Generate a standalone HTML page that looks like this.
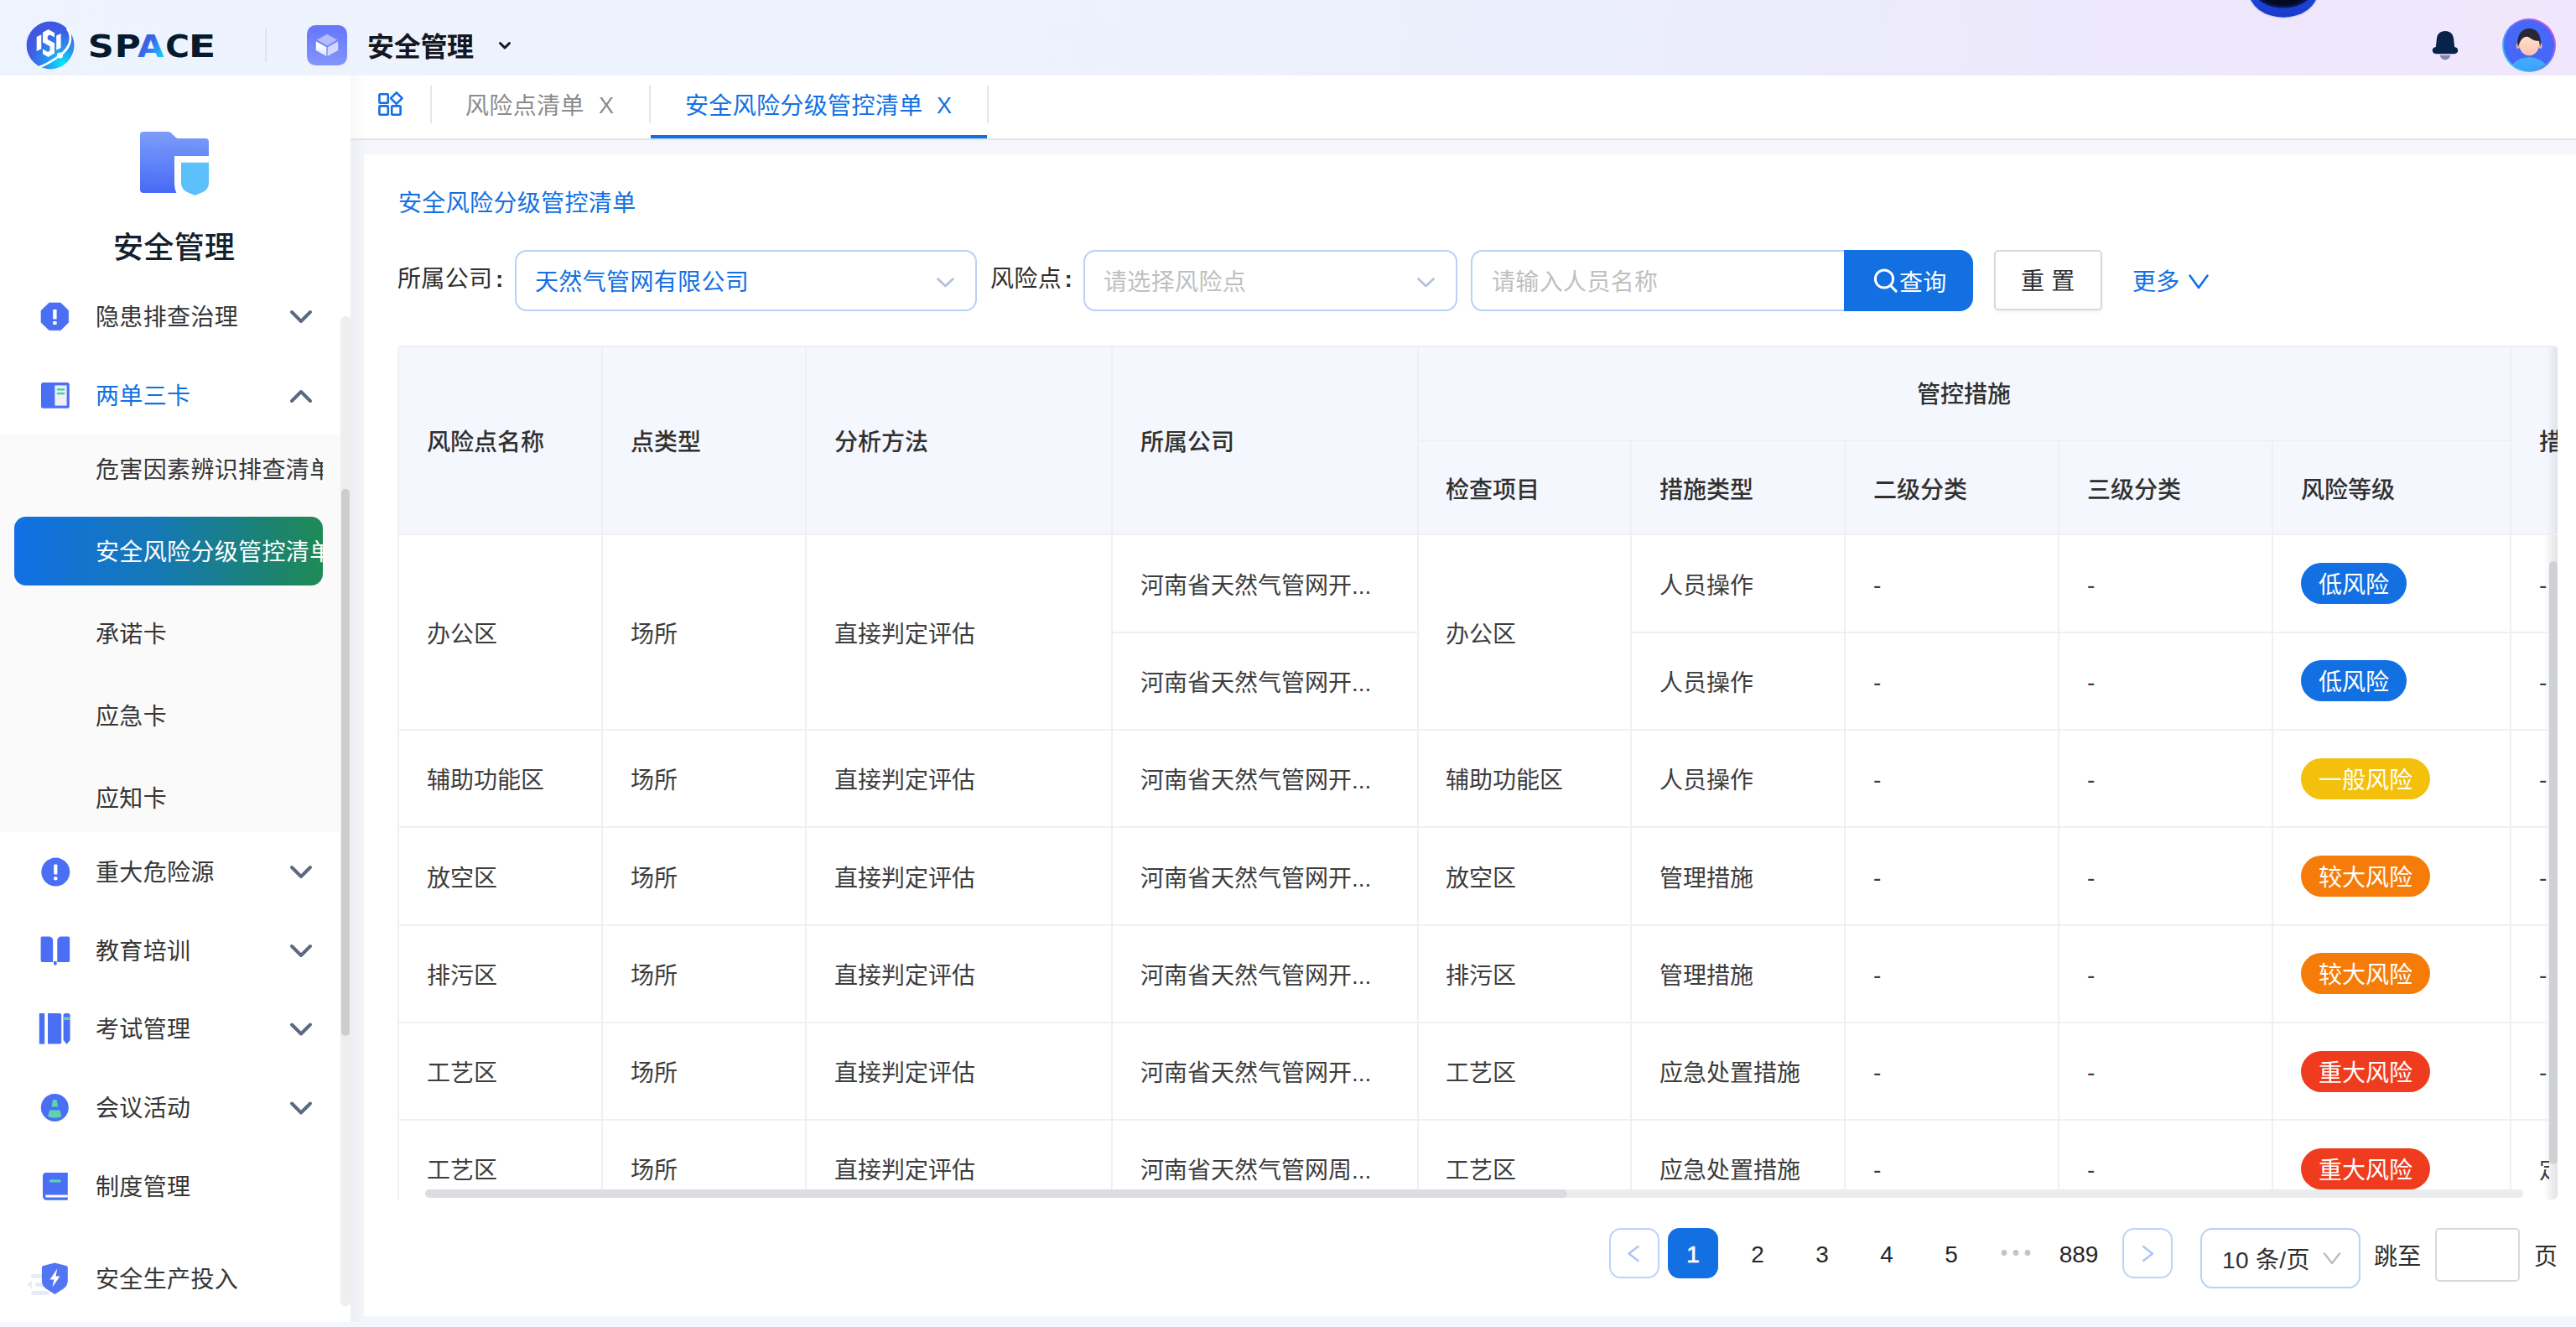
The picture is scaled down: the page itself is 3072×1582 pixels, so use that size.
<!DOCTYPE html>
<html lang="zh-CN">
<head>
<meta charset="utf-8">
<title>安全风险分级管控清单</title>
<style>
*{box-sizing:border-box;margin:0;padding:0}
html,body{width:3072px;height:1582px;overflow:hidden}
body{position:relative;background:#f4f7fe;font-family:"Liberation Sans","Noto Sans CJK SC",sans-serif;font-size:28px;color:#2e2e2e;line-height:1}
.a{position:absolute}
.t{position:absolute;white-space:nowrap;line-height:40px;height:40px;font-size:28px;margin-top:2px;letter-spacing:0.35px}
svg{position:absolute;overflow:visible}
/* header */
#hdr{position:absolute;left:0;top:0;width:3072px;height:90px;background:linear-gradient(93deg,#eef4fd 0%,#ecf1fd 50%,#ebedfc 66%,#ede8fc 82%,#f1e7fc 100%);overflow:hidden}
/* sidebar */
#side{position:absolute;left:0;top:90px;width:418px;height:1486px;background:#fff;overflow:hidden}
#sub{position:absolute;left:0;top:518px;width:406px;height:474px;background:#fafafa}
#strack{position:absolute;left:405.500px;top:377px;width:12.500px;height:1180px;background:#eeeeee;border-radius:6px}
#sthumb{position:absolute;left:407px;top:583px;width:10px;height:652px;background:#cdcdcf;border-radius:5px}
.mi{color:#363636}
.pill{position:absolute;left:17px;top:616px;width:368px;height:82px;border-radius:14px;background:linear-gradient(90deg,#1170e4 0%,#1578b8 45%,#1b8276 80%,#1f8a56 100%)}
.clip{overflow:hidden;width:270px}
/* main */
#main{position:absolute;left:418px;top:90px;width:2654px;height:1486px;background:linear-gradient(90deg,#eceef3 0,#eff1f6 6px,#f3f5fa 14px,#f4f6fb 18px)}
#tabs{position:absolute;left:418px;top:90px;width:2654px;height:77px;background:linear-gradient(90deg,#f8f8f8 0,#fafbfa 8px,#fff 18px);border-bottom:2px solid #e3e3e4}
#card{position:absolute;left:434px;top:184px;width:2638px;height:1385px;background:#fff}
.vd{position:absolute;width:2px;background:#e6e6e6}
.blue{color:#1270e3}
.sel{position:absolute;border:2px solid #b9d1f6;border-radius:14px;background:#fff}
.ph{color:#bfbfbf}
/* table */
#tbl{position:absolute;left:474px;top:412px;width:2576px;height:1018px;overflow:hidden;background:#fff;border-radius:5px 5px 6px 0}
#thead{position:absolute;left:0;top:0;width:2576px;height:226px;background:#f4f7fe}
.vl{position:absolute;width:2px;background:#f0f0f0}
.hl{position:absolute;height:2px;background:#f0f0f0}
.th{position:absolute;white-space:nowrap;line-height:40px;height:40px;font-size:28px;font-weight:500;color:#303030;margin-top:3px}
.td{position:absolute;white-space:nowrap;line-height:40px;height:40px;font-size:28px;color:#3d3d3d;margin-top:3px}
.bd{position:absolute;height:49px;border-radius:25px;color:#fff;font-size:28px;line-height:53px;text-align:center;white-space:nowrap}
.pg{position:absolute;top:1464px;width:60px;height:60px;line-height:63px;text-align:center;font-size:28px;color:#262626}
</style>
</head>
<body>
<div id="hdr">
  <!-- floating orb -->
  <svg style="left:2673px;top:-50px" width="100" height="100" viewBox="2673 -50 100 100">
    <defs><radialGradient id="orb" cx="50%" cy="50%" r="50%"><stop offset="0" stop-color="#01040f"/><stop offset="0.82" stop-color="#030a26"/><stop offset="1" stop-color="#0b1f78"/></radialGradient>
    <linearGradient id="orb2" x1="0" y1="0" x2="0" y2="1"><stop offset="0.5" stop-color="#2148dc"/><stop offset="1" stop-color="#1a3ac8"/></linearGradient></defs>
    <ellipse cx="2723" cy="-9.500" rx="42" ry="31.700" fill="#b9b4e4" opacity="0.45"/>
    <ellipse cx="2723" cy="-10" rx="41" ry="30.700" fill="url(#orb2)"/>
    <ellipse cx="2723" cy="-12" rx="35.200" ry="21.600" fill="url(#orb)"/>
  </svg>
  <!-- logo -->
  <svg style="left:28px;top:22px" width="64" height="64" viewBox="28 22 64 64">
    <defs>
      <radialGradient id="lg1" gradientUnits="userSpaceOnUse" cx="74" cy="76" r="46"><stop offset="0" stop-color="#04eafc"/><stop offset="0.4" stop-color="#2596f0"/><stop offset="0.8" stop-color="#3c62e4"/><stop offset="1" stop-color="#3f58e0"/></radialGradient>
    </defs>
    <circle cx="60" cy="54" r="28.4" fill="url(#lg1)"/>
    <path d="M80.500 34.500 C87.500 45 83.500 57.500 71.500 66 C63.500 72 55 77 47.500 79.800" fill="none" stroke="#fff" stroke-width="2.800" stroke-linecap="round"/>
    <circle cx="71.5" cy="66" r="3.6" fill="#fff"/>
    <path d="M43.7 44 L49.3 41.2 L49.3 58.2 L43.7 61 Z" fill="#fff"/>
    <path d="M67.2 42.5 L72.6 40 L72.6 57 L67.2 59.8 Z" fill="#fff"/>
    <path d="M57.5 35 L65 39.3 L65 44.5 L59.5 41.5 L56.8 43 L56.8 47 L65 51.6 L65 63.6 L57.5 68 L51 64.2 L51 58.6 L57 62 L59.6 60.5 L59.6 55.2 L51 50.4 L51 38.8 Z" fill="#fff"/>
  </svg>
  <svg style="left:100px;top:30px" width="170" height="50" viewBox="100 30 170 50">
    <defs><linearGradient id="lgA" gradientUnits="userSpaceOnUse" x1="165" y1="44" x2="195" y2="65"><stop offset="0" stop-color="#3f4fdc"/><stop offset="0.5" stop-color="#3470ec"/><stop offset="1" stop-color="#14ccf8"/></linearGradient></defs>
    <text y="68.3" font-family="DejaVu Sans, Liberation Sans, sans-serif" font-weight="700" font-size="37.6" fill="#061a2e"><tspan x="104.8" textLength="31.1" lengthAdjust="spacingAndGlyphs">S</tspan><tspan x="136.8" textLength="31.1" lengthAdjust="spacingAndGlyphs">P</tspan><tspan x="164.1" textLength="31.4" lengthAdjust="spacingAndGlyphs" fill="url(#lgA)">A</tspan><tspan x="197.2" textLength="28.7" lengthAdjust="spacingAndGlyphs">C</tspan><tspan x="224.8" textLength="32.6" lengthAdjust="spacingAndGlyphs">E</tspan></text>
  </svg>
  <div class="a" style="left:316px;top:34px;width:2px;height:40px;background:#dfe3ee"></div>
  <!-- module icon -->
  <svg style="left:366px;top:30px" width="48" height="48" viewBox="366 30 48 48">
    <defs>
      <linearGradient id="mg" x1="0" y1="0" x2="0" y2="1"><stop offset="0" stop-color="#6476fb"/><stop offset="1" stop-color="#8295fc"/></linearGradient>
      <linearGradient id="mgl" x1="0" y1="0" x2="0" y2="1"><stop offset="0.3" stop-color="#ffffff"/><stop offset="1" stop-color="#cfe6ff"/></linearGradient>
    </defs>
    <rect x="366" y="30" width="48" height="48" rx="10.5" fill="url(#mg)"/>
    <path d="M390 40.8 L402.2 47.6 L390 54.4 L377.8 47.6 Z" fill="#b3bbfd"/>
    <path d="M376.8 49.2 L389.3 56.2 L389.3 67 L376.8 60 Z" fill="url(#mgl)"/>
    <path d="M403.2 49.2 L390.7 56.2 L390.7 67 L403.2 60 Z" fill="#d4d8fe"/>
  </svg>
  <div class="t" style="left:438px;top:34px;font-size:32px;font-weight:700;color:#14171f;letter-spacing:-0.3px">安全管理</div>
  <svg style="left:592px;top:47px" width="20" height="14" viewBox="592 47 20 14"><path d="M596.5 51.5 L602 57 L607.5 51.5" fill="none" stroke="#14171f" stroke-width="3" stroke-linecap="round" stroke-linejoin="round"/></svg>
  <!-- bell -->
  <svg style="left:2896px;top:34px" width="40" height="40" viewBox="2896 34 40 40">
    <path d="M2916 36.900 C2909.800 36.900 2906.600 40.800 2906 45.500 L2904.800 56 C2902.400 56.200 2900.800 57.900 2900.800 60.100 C2900.800 62.500 2902.500 64.200 2905 64.200 L2927 64.200 C2929.500 64.200 2931.200 62.500 2931.200 60.100 C2931.200 57.900 2929.600 56.200 2927.200 56 L2926 45.500 C2925.400 40.800 2922.200 36.900 2916 36.900 Z" fill="#07234a"/>
    <path d="M2909.600 65.700 L2922.400 65.700 C2921.700 69.200 2919.200 71.200 2916 71.200 C2912.800 71.200 2910.300 69.200 2909.600 65.700 Z" fill="#8089ad"/>
  </svg>
  <!-- avatar -->
  <svg style="left:2984px;top:22px" width="64" height="64" viewBox="0 0 64 64">
    <defs>
      <linearGradient id="ring" x1="0" y1="1" x2="1" y2="0"><stop offset="0" stop-color="#2fe6e6"/><stop offset="0.5" stop-color="#5b7cf7"/><stop offset="1" stop-color="#ff3de0"/></linearGradient>
      <linearGradient id="skin" x1="0" y1="0" x2="0" y2="1"><stop offset="0" stop-color="#ffe6d2"/><stop offset="1" stop-color="#fbc3ae"/></linearGradient>
      <linearGradient id="shirt" x1="0" y1="0" x2="0" y2="1"><stop offset="0" stop-color="#45aeff"/><stop offset="1" stop-color="#2f8cf5"/></linearGradient>
      <clipPath id="avc"><circle cx="32" cy="32" r="30"/></clipPath>
    </defs>
    <circle cx="32" cy="32" r="32" fill="url(#ring)"/>
    <circle cx="32" cy="32" r="30" fill="#4767f9"/>
    <g clip-path="url(#avc)">
      <ellipse cx="32" cy="66" rx="24" ry="19.800" fill="url(#shirt)"/>
      <ellipse cx="18.900" cy="32.800" rx="2.100" ry="3.200" fill="#f6b29c"/>
      <ellipse cx="45.500" cy="32.800" rx="2.100" ry="3.200" fill="#f6b29c"/>
      <ellipse cx="32.200" cy="30.500" rx="12" ry="13.800" fill="url(#skin)"/>
      <path d="M19 34 C16.500 22 22 12 32.300 12 C42.600 12 47.800 22 45.400 34 C44.800 31.500 44.300 29 44 26.800 C40 27 36.600 25.600 33.600 23.400 C31 21.500 28.500 21.200 26 22.600 C22.600 24.600 20.600 28.500 19 34 Z" fill="#2a2832"/>
    </g>
  </svg>
</div>
<div id="side"></div>
<div id="sub"></div>
<div id="strack"></div>
<div id="sthumb"></div>
<!-- sidebar big icon -->
<svg style="left:160px;top:150px" width="100" height="90" viewBox="160 150 100 90">
  <defs>
    <linearGradient id="fg" x1="0" y1="0" x2="0" y2="1"><stop offset="0" stop-color="#7c9df9"/><stop offset="1" stop-color="#476af6"/></linearGradient>
  </defs>
  <path d="M171 157 L200 157 C202 157 203.500 157.800 205 159.300 L209.500 163.800 C210.500 164.800 211.500 165 213 165 L245 165 C247.500 165 249 166.500 249 169 L249 226 C249 228.500 247.500 230 245 230 L171 230 C168.500 230 167 228.500 167 226 L167 161 C167 158.500 168.500 157 171 157 Z" fill="url(#fg)"/>
  <path d="M208 186 L252 186 L252 236 L214 236 C211 232 208 226 208 219 Z" fill="#fff"/>
  <path d="M216 193.800 L249 193.800 L249 218 C249 223 246.500 226.500 242 229 L232.500 233 L223 229 C218.500 226.500 216 223 216 218 Z" fill="#5cc0fa"/>
</svg>
<div class="t" style="left:135px;top:272px;font-size:36px;font-weight:500;color:#15202d;line-height:44px;height:44px">安全管理</div>

<!-- menu icons -->
<svg style="left:40px;top:350px" width="56" height="56" viewBox="40 350 56 56">
  <path d="M58.600 361 L72.400 361 L81.700 370.300 L81.700 384.400 L72.400 393.700 L58.600 393.700 L49 384.400 L49 370.300 Z" fill="#4a6ff5" stroke="#4a6ff5" stroke-width="0.600" stroke-linejoin="round"/>
  <rect x="63.200" y="369" width="4.400" height="11.500" fill="#fff"/><rect x="63.200" y="383" width="4.400" height="4" fill="#fff"/>
</svg>
<svg style="left:40px;top:444px" width="56" height="56" viewBox="40 444 56 56">
  <rect x="49" y="456" width="33.800" height="30.800" rx="2.500" fill="#4a6ff5"/>
  <rect x="65.400" y="459.400" width="14.200" height="24.200" fill="#eef0f5"/>
  <rect x="67.800" y="463" width="9.400" height="2.600" fill="#54cfa8"/><rect x="67.800" y="467.800" width="9.400" height="2.600" fill="#54cfa8"/>
</svg>
<svg style="left:40px;top:1012px" width="56" height="56" viewBox="40 1012 56 56">
  <circle cx="66.300" cy="1039.600" r="17" fill="#4a6ff5"/>
  <rect x="64.200" y="1030.500" width="4.200" height="12" rx="1" fill="#fff"/><circle cx="66.300" cy="1047.200" r="2.300" fill="#fff"/>
</svg>
<svg style="left:40px;top:1105px" width="56" height="56" viewBox="40 1105 56 56">
  <path d="M48.600 1118.500 C48.600 1117.300 49.400 1116.500 50.600 1116.500 L58 1116.500 C61 1116.500 63.200 1118.500 63.200 1121.500 L63.200 1147 L50.600 1147 C49.400 1147 48.600 1146.200 48.600 1145 Z" fill="#4a6ff5"/>
  <path d="M83.200 1118.500 C83.200 1117.300 82.400 1116.500 81.200 1116.500 L73.500 1116.500 C70.500 1116.500 68.300 1118.500 68.300 1121.500 L68.300 1147 L81.200 1147 C82.400 1147 83.200 1146.200 83.200 1145 Z" fill="#4a6ff5"/>
  <rect x="64" y="1146" width="3.600" height="4.600" rx="1" fill="#4a6ff5"/>
</svg>
<svg style="left:40px;top:1198px" width="56" height="56" viewBox="40 1198 56 56">
  <rect x="46.800" y="1208" width="6.400" height="36.600" fill="#4a6ff5"/>
  <path d="M57 1208 L71 1208 C72.300 1208 73.200 1208.900 73.200 1210.200 L73.200 1242.400 C73.200 1243.700 72.300 1244.600 71 1244.600 L57 1244.600 Z" fill="#4a6ff5"/>
  <path d="M75.600 1210.500 C75.600 1209 76.600 1208 78.100 1208 L81.100 1208 C82.600 1208 83.600 1209 83.600 1210.500 L83.600 1240 L79.600 1245 L75.600 1240 Z" fill="#4a6ff5"/>
  <rect x="75.600" y="1212.600" width="8" height="3.400" fill="#5fd3b0"/>
</svg>
<svg style="left:40px;top:1292px" width="56" height="56" viewBox="40 1292 56 56">
  <circle cx="65.300" cy="1320.400" r="16.500" fill="#4a6ff5"/>
  <path d="M64 1311 L66.600 1311 C67.300 1311 67.600 1311.300 67.800 1312 L69.200 1319.600 L61.400 1319.600 L62.800 1312 C63 1311.300 63.300 1311 64 1311 Z" fill="#5fd3b0"/>
  <path d="M60.200 1323.600 L70.400 1323.600 C71.200 1323.600 71.600 1324 71.800 1324.700 L73.400 1331 C70.500 1333.200 60.100 1333.200 57.200 1331 L58.800 1324.700 C59 1324 59.400 1323.600 60.200 1323.600 Z" fill="#5fd3b0"/>
</svg>
<svg style="left:40px;top:1386px" width="56" height="56" viewBox="40 1386 56 56">
  <path d="M55 1398 L80.800 1398 L80.800 1430.800 L55.500 1430.800 C52.800 1430.800 51 1429 51 1426.300 L51 1402 C51 1399.500 52.500 1398 55 1398 Z" fill="#4a6ff5"/>
  <path d="M55.700 1424.600 L80.800 1424.600 L80.800 1427.600 L55.700 1427.600 C54.600 1427.600 54 1427 54 1426.100 C54 1425.200 54.600 1424.600 55.700 1424.600 Z" fill="#fff"/>
  <rect x="59.300" y="1406.300" width="13" height="3.200" fill="#5fd3b0"/>
</svg>
<!-- faint collapse icon -->
<svg style="left:28px;top:1512px" width="40" height="40" viewBox="28 1512 40 40" opacity="0.9">
  <rect x="37" y="1519" width="21" height="5" rx="2.500" fill="#e4e9f3"/><rect x="42" y="1529" width="16" height="5" rx="2.500" fill="#e4e9f3"/><rect x="37" y="1539" width="21" height="5" rx="2.500" fill="#e4e9f3"/>
  <path d="M32 1531.500 L38 1527 L38 1536 Z" fill="#e4e9f3"/>
</svg>
<svg style="left:40px;top:1496px" width="56" height="56" viewBox="40 1496 56 56">
  <path d="M65.300 1505.600 L79 1509 C80.200 1509.300 80.800 1510 80.800 1511.200 L80.800 1527 C80.800 1531 79 1534 75.500 1536.500 L65.300 1542.900 L55.200 1536.500 C51.700 1534 49.900 1531 49.900 1527 L49.900 1511.200 C49.900 1510 50.500 1509.300 51.700 1509 Z" fill="#4a6ff5" opacity="0.96"/>
  <path d="M68.300 1512.500 L59.500 1525.500 L64.300 1525.500 L62.500 1534.500 L71.500 1521.500 L66.500 1521.500 Z" fill="#fff"/>
</svg>
<!-- chevrons -->
<svg style="left:340px;top:360px" width="40" height="36" viewBox="340 360 40 36"><path d="M348 372 L359 383 L370 372" fill="none" stroke="#5b6a7f" stroke-width="4" stroke-linecap="round" stroke-linejoin="round"/></svg>
<svg style="left:340px;top:454px" width="40" height="36" viewBox="340 454 40 36"><path d="M348 478 L359 467 L370 478" fill="none" stroke="#5b6a7f" stroke-width="4" stroke-linecap="round" stroke-linejoin="round"/></svg>
<svg style="left:340px;top:1022px" width="40" height="36" viewBox="340 1022 40 36"><path d="M348 1034 L359 1045 L370 1034" fill="none" stroke="#5b6a7f" stroke-width="4" stroke-linecap="round" stroke-linejoin="round"/></svg>
<svg style="left:340px;top:1116px" width="40" height="36" viewBox="340 1116 40 36"><path d="M348 1128 L359 1139 L370 1128" fill="none" stroke="#5b6a7f" stroke-width="4" stroke-linecap="round" stroke-linejoin="round"/></svg>
<svg style="left:340px;top:1210px" width="40" height="36" viewBox="340 1210 40 36"><path d="M348 1221.500 L359 1232.500 L370 1221.500" fill="none" stroke="#5b6a7f" stroke-width="4" stroke-linecap="round" stroke-linejoin="round"/></svg>
<svg style="left:340px;top:1304px" width="40" height="36" viewBox="340 1304 40 36"><path d="M348 1315.500 L359 1326.500 L370 1315.500" fill="none" stroke="#5b6a7f" stroke-width="4" stroke-linecap="round" stroke-linejoin="round"/></svg>
<!-- menu text -->
<div class="t mi" style="left:114px;top:357px">隐患排查治理</div>
<div class="t mi blue" style="left:114px;top:451px">两单三卡</div>
<div class="t mi clip" style="left:114px;top:539px;width:271px">危害因素辨识排查清单</div>
<div class="pill"></div>
<div class="t mi clip" style="left:114px;top:637px;width:271px;color:#fff">安全风险分级管控清单</div>
<div class="t mi" style="left:114px;top:735px">承诺卡</div>
<div class="t mi" style="left:114px;top:833px">应急卡</div>
<div class="t mi" style="left:114px;top:931px">应知卡</div>
<div class="t mi" style="left:114px;top:1019px">重大危险源</div>
<div class="t mi" style="left:114px;top:1113px">教育培训</div>
<div class="t mi" style="left:114px;top:1206px">考试管理</div>
<div class="t mi" style="left:114px;top:1300px">会议活动</div>
<div class="t mi" style="left:114px;top:1394px">制度管理</div>
<div class="t mi" style="left:114px;top:1504px">安全生产投入</div>
<div id="main"></div>
<div id="tabs"></div>
<!-- tab bar -->
<svg style="left:448px;top:106px" width="36" height="36" viewBox="448 106 36 36">
  <g fill="none" stroke="#1270e3" stroke-width="2.600" stroke-linejoin="round">
    <rect x="452.400" y="112.300" width="10.400" height="10.400" rx="1"/>
    <rect x="452.400" y="126.400" width="10.400" height="10.400" rx="1"/>
    <rect x="467.200" y="126.400" width="10.400" height="10.400" rx="1"/>
    <path d="M472.800 110.300 L479.600 117.100 L472.800 123.900 L466 117.100 Z"/>
  </g>
</svg>
<div class="vd" style="left:513px;top:102px;height:45px"></div>
<div class="vd" style="left:774px;top:102px;height:45px"></div>
<div class="vd" style="left:1177px;top:102px;height:45px"></div>
<div class="t" style="left:555px;top:105px;color:#8c8c8c">风险点清单</div>
<div class="t" style="left:714px;top:104px;color:#8c8c8c;font-size:27px;letter-spacing:0">X</div>
<div class="t blue" style="left:817px;top:105px">安全风险分级管控清单</div>
<div class="t blue" style="left:1117px;top:104px;font-size:27px;letter-spacing:0">X</div>
<div class="a" style="left:776px;top:161px;width:401px;height:4px;background:#1270e3"></div>

<div id="card"></div>
<div class="t blue" style="left:475px;top:221px">安全风险分级管控清单</div>

<!-- filter row -->
<div class="t" style="left:474px;top:311px">所属公司<span style="margin-left:3.5px;font-weight:700">:</span></div>
<div class="sel" style="left:614px;top:298px;width:551px;height:73px"></div>
<div class="t blue" style="left:638px;top:315px">天然气管网有限公司</div>
<svg style="left:1112px;top:324px" width="32" height="24" viewBox="1112 324 32 24"><path d="M1118.500 332.500 L1127.500 341 L1136.500 332.500" fill="none" stroke="#b4c0de" stroke-width="2.800" stroke-linecap="round" stroke-linejoin="round"/></svg>
<div class="t" style="left:1181px;top:311px">风险点<span style="margin-left:3.5px;font-weight:700">:</span></div>
<div class="sel" style="left:1292px;top:298px;width:446px;height:73px"></div>
<div class="t ph" style="left:1316px;top:315px">请选择风险点</div>
<svg style="left:1685px;top:324px" width="32" height="24" viewBox="1685 324 32 24"><path d="M1691.500 332.500 L1700.500 341 L1709.500 332.500" fill="none" stroke="#b4c0de" stroke-width="2.800" stroke-linecap="round" stroke-linejoin="round"/></svg>
<div class="sel" style="left:1754px;top:298px;width:460px;height:73px;border-radius:14px 0 0 14px"></div>
<div class="t ph" style="left:1779px;top:315px">请输入人员名称</div>
<div class="a" style="left:2199px;top:298px;width:154px;height:73px;background:#1270e3;border-radius:0 16px 16px 0"></div>
<svg style="left:2230px;top:316px" width="40" height="40" viewBox="2230 316 40 40"><circle cx="2247" cy="332.500" r="10.600" fill="none" stroke="#fff" stroke-width="3"/><path d="M2254.600 340.500 L2261 347" stroke="#fff" stroke-width="3.200" stroke-linecap="round"/></svg>
<div class="t" style="left:2265px;top:316px;color:#fff">查询</div>
<div class="a" style="left:2378px;top:298px;width:129px;height:72px;background:#fff;border:2px solid #d9d9d9;border-radius:5px;box-shadow:0 3px 4px rgba(0,0,0,0.04)"></div>
<div class="t" style="left:2410px;top:314px">重<span style="margin-left:8px">置</span></div>
<div class="t blue" style="left:2543px;top:315px">更多</div>
<svg style="left:2604px;top:320px" width="36" height="30" viewBox="2604 320 36 30"><path d="M2611.500 328.500 L2622 343 L2632.500 328.500" fill="none" stroke="#1270e3" stroke-width="2.600" stroke-linecap="round" stroke-linejoin="round"/></svg>
<div id="tbl">
<div id="thead"></div>
<div class="a" style="left:2563px;top:0;width:13px;height:226px;background:linear-gradient(90deg,rgba(224,227,236,0) 0%,rgba(224,227,236,1) 100%)"></div>
<div class="a" style="left:2560px;top:226px;width:16px;height:792px;background:linear-gradient(90deg,rgba(228,228,232,0) 0%,rgba(228,228,232,1) 100%)"></div>
<div class="vl" style="left:0px;top:0px;height:1018px"></div>
<div class="vl" style="left:243px;top:0px;height:1006px"></div>
<div class="vl" style="left:486px;top:0px;height:1006px"></div>
<div class="vl" style="left:851px;top:0px;height:1006px"></div>
<div class="vl" style="left:1216px;top:0px;height:1006px"></div>
<div class="vl" style="left:1470px;top:112px;height:894px"></div>
<div class="vl" style="left:1725px;top:112px;height:894px"></div>
<div class="vl" style="left:1980px;top:112px;height:894px"></div>
<div class="vl" style="left:2235px;top:112px;height:894px"></div>
<div class="vl" style="left:2519px;top:0px;height:1006px"></div>
<div class="hl" style="left:1216px;top:112px;width:1305px"></div>
<div class="hl" style="left:0px;top:224px;width:2576px"></div>
<div class="hl" style="left:0px;top:0px;width:2576px"></div>
<div class="hl" style="left:851px;top:341px;width:367px"></div>
<div class="hl" style="left:1470px;top:341px;width:1106px"></div>
<div class="hl" style="left:0px;top:457px;width:2576px"></div>
<div class="hl" style="left:0px;top:573px;width:2576px"></div>
<div class="hl" style="left:0px;top:690px;width:2576px"></div>
<div class="hl" style="left:0px;top:806px;width:2576px"></div>
<div class="hl" style="left:0px;top:922px;width:2576px"></div>
<div class="hl" style="left:0px;top:1038px;width:2576px"></div>
<div class="th" style="left:35px;top:93px">风险点名称</div>
<div class="th" style="left:278px;top:93px">点类型</div>
<div class="th" style="left:521px;top:93px">分析方法</div>
<div class="th" style="left:886px;top:93px">所属公司</div>
<div class="th" style="left:1812px;top:36px">管控措施</div>
<div class="th" style="left:1250px;top:150px">检查项目</div>
<div class="th" style="left:1505px;top:150px">措施类型</div>
<div class="th" style="left:1760px;top:150px">二级分类</div>
<div class="th" style="left:2015px;top:150px">三级分类</div>
<div class="th" style="left:2270px;top:150px">风险等级</div>
<div class="th" style="left:2554px;top:93px">措施</div>
<div class="td" style="left:35px;top:322px">办公区</div>
<div class="td" style="left:278px;top:322px">场所</div>
<div class="td" style="left:521px;top:322px">直接判定评估</div>
<div class="td" style="left:1250px;top:322px">办公区</div>
<div class="td" style="left:886px;top:264px">河南省天然气管网开...</div>
<div class="td" style="left:1505px;top:264px">人员操作</div>
<div class="td" style="left:1760px;top:263px">-</div>
<div class="td" style="left:2015px;top:263px">-</div>
<div class="bd" style="left:2270px;top:259px;width:126px;background:#1270e3">低风险</div>
<div class="td" style="left:2554px;top:263px">-</div>
<div class="td" style="left:886px;top:380px">河南省天然气管网开...</div>
<div class="td" style="left:1505px;top:380px">人员操作</div>
<div class="td" style="left:1760px;top:379px">-</div>
<div class="td" style="left:2015px;top:379px">-</div>
<div class="bd" style="left:2270px;top:375px;width:126px;background:#1270e3">低风险</div>
<div class="td" style="left:2554px;top:379px">-</div>
<div class="td" style="left:35px;top:496px">辅助功能区</div>
<div class="td" style="left:278px;top:496px">场所</div>
<div class="td" style="left:521px;top:496px">直接判定评估</div>
<div class="td" style="left:886px;top:496px">河南省天然气管网开...</div>
<div class="td" style="left:1250px;top:496px">辅助功能区</div>
<div class="td" style="left:1505px;top:496px">人员操作</div>
<div class="td" style="left:1760px;top:495px">-</div>
<div class="td" style="left:2015px;top:495px">-</div>
<div class="bd" style="left:2270px;top:492px;width:154px;background:#f3c00b">一般风险</div>
<div class="td" style="left:2554px;top:495px">-</div>
<div class="td" style="left:35px;top:613px">放空区</div>
<div class="td" style="left:278px;top:613px">场所</div>
<div class="td" style="left:521px;top:613px">直接判定评估</div>
<div class="td" style="left:886px;top:613px">河南省天然气管网开...</div>
<div class="td" style="left:1250px;top:613px">放空区</div>
<div class="td" style="left:1505px;top:613px">管理措施</div>
<div class="td" style="left:1760px;top:612px">-</div>
<div class="td" style="left:2015px;top:612px">-</div>
<div class="bd" style="left:2270px;top:608px;width:154px;background:#f57c09">较大风险</div>
<div class="td" style="left:2554px;top:612px">-</div>
<div class="td" style="left:35px;top:729px">排污区</div>
<div class="td" style="left:278px;top:729px">场所</div>
<div class="td" style="left:521px;top:729px">直接判定评估</div>
<div class="td" style="left:886px;top:729px">河南省天然气管网开...</div>
<div class="td" style="left:1250px;top:729px">排污区</div>
<div class="td" style="left:1505px;top:729px">管理措施</div>
<div class="td" style="left:1760px;top:728px">-</div>
<div class="td" style="left:2015px;top:728px">-</div>
<div class="bd" style="left:2270px;top:724px;width:154px;background:#f57c09">较大风险</div>
<div class="td" style="left:2554px;top:728px">-</div>
<div class="td" style="left:35px;top:845px">工艺区</div>
<div class="td" style="left:278px;top:845px">场所</div>
<div class="td" style="left:521px;top:845px">直接判定评估</div>
<div class="td" style="left:886px;top:845px">河南省天然气管网开...</div>
<div class="td" style="left:1250px;top:845px">工艺区</div>
<div class="td" style="left:1505px;top:845px">应急处置措施</div>
<div class="td" style="left:1760px;top:844px">-</div>
<div class="td" style="left:2015px;top:844px">-</div>
<div class="bd" style="left:2270px;top:841px;width:154px;background:#f03c1e">重大风险</div>
<div class="td" style="left:2554px;top:844px">-</div>
<div class="td" style="left:35px;top:961px">工艺区</div>
<div class="td" style="left:278px;top:961px">场所</div>
<div class="td" style="left:521px;top:961px">直接判定评估</div>
<div class="td" style="left:886px;top:961px">河南省天然气管网周...</div>
<div class="td" style="left:1250px;top:961px">工艺区</div>
<div class="td" style="left:1505px;top:961px">应急处置措施</div>
<div class="td" style="left:1760px;top:960px">-</div>
<div class="td" style="left:2015px;top:960px">-</div>
<div class="bd" style="left:2270px;top:957px;width:154px;background:#f03c1e">重大风险</div>
<div class="td" style="left:2554px;top:961px">定期检查</div>
<div class="a" style="left:33px;top:1006px;width:2502px;height:10px;border-radius:5px;background:#ebecee"></div>
<div class="a" style="left:33px;top:1006px;width:1362px;height:10px;border-radius:5px;background:#dcdde0"></div>
<div class="a" style="left:2566px;top:226px;width:10px;height:792px;background:linear-gradient(90deg,#f2f2f4 0%,#e4e4e8 100%)"></div>
<div class="a" style="left:2566px;top:257px;width:10px;height:719px;border-radius:5px;background:#d0d1d4"></div>
</div>
<!-- pagination -->
<div class="a" style="left:1919px;top:1464px;width:60px;height:60px;border:2px solid #bdd4f7;border-radius:14px;background:#fff"></div>
<svg style="left:1935px;top:1480px" width="28" height="28" viewBox="1935 1480 28 28"><path d="M1953.500 1486 L1942.500 1494.500 L1953.500 1503" fill="none" stroke="#a9c6f5" stroke-width="2.400" stroke-linecap="round" stroke-linejoin="round"/></svg>
<div class="pg" style="left:1989px;background:#1270e3;border-radius:14px;color:#fff;-webkit-text-stroke:0.7px #fff">1</div>
<div class="pg" style="left:2066px">2</div>
<div class="pg" style="left:2143px">3</div>
<div class="pg" style="left:2220px">4</div>
<div class="pg" style="left:2297px">5</div>
<svg style="left:2380px;top:1484px" width="48" height="20" viewBox="2380 1484 48 20"><circle cx="2390" cy="1493.500" r="3.400" fill="#c4c4c4"/><circle cx="2404" cy="1493.500" r="3.400" fill="#c4c4c4"/><circle cx="2418" cy="1493.500" r="3.400" fill="#c4c4c4"/></svg>
<div class="pg" style="left:2449px">889</div>
<div class="a" style="left:2531px;top:1464px;width:60px;height:60px;border:2px solid #bdd4f7;border-radius:14px;background:#fff"></div>
<svg style="left:2547px;top:1480px" width="28" height="28" viewBox="2547 1480 28 28"><path d="M2556 1486 L2567 1494.500 L2556 1503" fill="none" stroke="#a9c6f5" stroke-width="2.400" stroke-linecap="round" stroke-linejoin="round"/></svg>
<div class="sel" style="left:2624px;top:1464px;width:191px;height:72px"></div>
<div class="t" style="left:2650px;top:1481px">10 条/页</div>
<svg style="left:2766px;top:1488px" width="30" height="24" viewBox="2766 1488 30 24"><path d="M2772 1494.500 L2781 1506 L2790 1494.500" fill="none" stroke="#bcbcbc" stroke-width="2.400" stroke-linecap="round" stroke-linejoin="round"/></svg>
<div class="t" style="left:2831px;top:1477px">跳至</div>
<div class="a" style="left:2904px;top:1464px;width:101px;height:64px;border:2px solid #d9d9d9;border-radius:5px;background:#fff"></div>
<div class="t" style="left:3022px;top:1477px">页</div>
</body>
</html>
